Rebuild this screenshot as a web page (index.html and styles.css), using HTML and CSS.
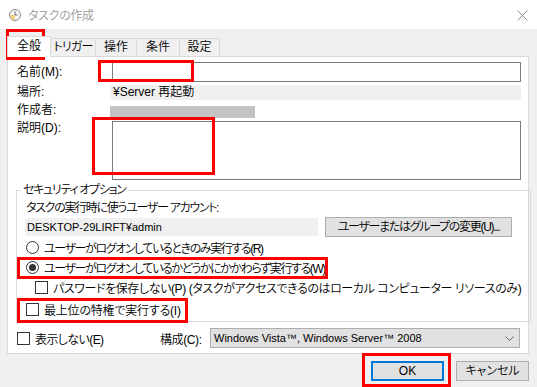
FILE: index.html
```html
<!DOCTYPE html>
<html lang="ja">

<head>
    <meta charset="UTF-8">
    <meta name="viewport" content="width=device-width, initial-scale=1.0">
    <title>タスクの作成</title>
    <link rel="stylesheet" href="styles.css">
</head>

<body>
    <div class="window">
        <div class="titlebar">
            <svg class="title-icon" width="12" height="12" viewBox="0 0 12 12">
                <circle cx="6" cy="6" r="5.5" fill="#f6f6f6" stroke="#8a8a8a" />
                <path d="M6 6 L1.2 6 A4.8 4.8 0 0 0 6 10.8 Z" fill="#f1d27a" />
                <path d="M6 2.2 L6 6 L8.5 6" fill="none" stroke="#6a6a6a" stroke-width="1" />
            </svg>
            <span class="title-text">タスクの作成</span>
            <svg class="close-icon" width="11" height="11" viewBox="0 0 11 11">
                <path d="M0.5 0.5 L10.5 10.5 M10.5 0.5 L0.5 10.5" stroke="#8a8a8a" stroke-width="1" />
            </svg>
        </div>

        <div class="body">
            <div class="tabs">
                <div class="tab active">全般</div>
                <div class="tab w45">トリガー</div>
                <div class="tab w41">操作</div>
                <div class="tab w43">条件</div>
                <div class="tab w40">設定</div>
            </div>

            <div class="panel">
                <div class="row row-name">
                    <span class="label">名前(M):</span>
                    <div class="input"></div>
                </div>
                <div class="row row-loc">
                    <span class="label">場所:</span>
                    <div class="readonly">¥Server 再起動</div>
                </div>
                <div class="row row-author">
                    <span class="label">作成者:</span>
                    <div class="redacted"></div>
                </div>
                <div class="row row-desc">
                    <span class="label">説明(D):</span>
                    <div class="textarea"></div>
                </div>

                <fieldset class="group">
                    <legend>セキュリティ オプション</legend>
                    <div class="account-label">タスクの実行時に使うユーザー アカウント:</div>
                    <div class="account-row">
                        <div class="account">DESKTOP-29LIRFT¥admin</div>
                        <div class="btn btn-change">ユーザーまたはグループの変更(U)...</div>
                    </div>
                    <div class="opt"><span class="radio"></span>ユーザーがログオンしているときのみ実行する(R)</div>
                    <div class="opt"><span class="radio checked"></span>ユーザーがログオンしているかどうかにかかわらず実行する(W)</div>
                    <div class="opt indent"><span class="check"></span>パスワードを保存しない(P) (タスクがアクセスできるのはローカル コンピューター リソースのみ)</div>
                    <div class="opt opt-last"><span class="check"></span>最上位の特権で実行する(I)</div>
                </fieldset>

                <div class="bottom-row">
                    <div class="opt hide-opt"><span class="check"></span>表示しない(E)</div>
                    <span class="config-label">構成(C):</span>
                    <div class="select">
                        <span class="select-text">Windows Vista™, Windows Server™ 2008</span>
                        <svg width="9" height="5" viewBox="0 0 9 5">
                            <path d="M0.5 0.5 L4.5 4.5 L8.5 0.5" fill="none" stroke="#606060" stroke-width="1" />
                        </svg>
                    </div>
                </div>
            </div>

            <div class="buttons">
                <div class="btn btn-ok">OK</div>
                <div class="btn">キャンセル</div>
            </div>
        </div>

        <!-- highlight boxes drawn over the dialog -->
        <div class="mark" style="left:6px;top:29px;width:39px;height:31px"></div>
        <div class="mark" style="left:98px;top:60px;width:96px;height:22px"></div>
        <div class="mark" style="left:92px;top:117px;width:123px;height:58px"></div>
        <div class="mark" style="left:17px;top:257px;width:311px;height:22px"></div>
        <div class="mark" style="left:17px;top:298px;width:171px;height:25px"></div>
        <div class="mark" style="left:362px;top:353px;width:89px;height:34px"></div>
    </div>
</body>

</html>
```

FILE: styles.css
```css
* {
    box-sizing: border-box;
}

body {
    margin: 0;
    background-color: #f0f0f0;
    font-family: "Liberation Sans", "Noto Sans CJK JP", sans-serif;
    font-size: 12px;
    font-weight: 350;
    font-feature-settings: "palt";
    color: #000;
}

.window {
    position: relative;
    width: 537px;
    height: 387px;
    overflow: hidden;
}

.titlebar {
    height: 29px;
    background-color: #fff;
    display: flex;
    align-items: center;
    padding: 0 9px 0 9px;
}

.title-icon {
    margin-top: 1px;
}

.title-text {
    margin-left: 7px;
    color: #9a9a9a;
    letter-spacing: -0.3px;
    flex: 1;
}

.close-icon {
    margin-top: 1px;
}

.body {
    padding: 0 8px 0 7px;
}

.tabs {
    display: flex;
    align-items: flex-end;
    height: 27px;
}

.tab {
    height: 18px;
    line-height: 17px;
    text-align: center;
    border: 1px solid #d9d9d9;
    border-bottom: none;
    border-left: none;
    background-color: #f0f0f0;
}

.tab.active {
    width: 44px;
    height: 21px;
    line-height: 19px;
    background-color: #fff;
    border-left: 1px solid #d9d9d9;
    margin-bottom: -1px;
    position: relative;
    z-index: 1;
}

.w45 { width: 45px; letter-spacing: -0.8px; }
.w41 { width: 41px; }
.w43 { width: 43px; }
.w40 { width: 40px; }

.panel {
    background-color: #fff;
    border: 1px solid #d9d9d9;
    padding: 5px 7px 4px 9px;
    height: 298px;
}

.row {
    display: flex;
}

.label {
    width: 93px;
    flex-shrink: 0;
    line-height: 15px;
}

.row-name {
    height: 20px;
    align-items: center;
}

.input {
    margin-left: 2px;
    flex: 1;
    height: 20px;
    border: 1px solid #7a7a7a;
    background-color: #fff;
}

.row-loc {
    margin-top: 3px;
    height: 15px;
}

.readonly {
    flex: 1;
    background-color: #f0f0f0;
    padding-left: 3px;
    line-height: 15px;
}

.row-author {
    margin-top: 3px;
    height: 15px;
    align-items: center;
}

.redacted {
    width: 145px;
    height: 12px;
    margin-top: 3px;
    background-color: #c3c3c3;
}

.row-desc {
    margin-top: 3px;
}

.textarea {
    margin-left: 2px;
    flex: 1;
    height: 59px;
    border: 1px solid #7a7a7a;
}

.group {
    margin: 3px 1px 0 -1px;
    padding: 0 9px 2px 9px;
    border: 1px solid #dcdcdc;
}

.group legend {
    padding: 0 2px;
    margin-left: -5px;
    line-height: 14px;
    letter-spacing: -1.3px;
}

.account-label {
    margin-top: 4px;
    line-height: 15px;
    letter-spacing: -1.3px;
}

.account-row {
    margin-top: 1px;
    height: 20px;
    display: flex;
    align-items: center;
}

.account {
    width: 293px;
    height: 18px;
    line-height: 18px;
    font-size: 11px;
    background-color: #f0f0f0;
    padding-left: 2px;
    margin-left: -1px;
}

.btn {
    height: 20px;
    line-height: 18px;
    border: 1px solid #adadad;
    background-color: #e1e1e1;
    text-align: center;
    white-space: nowrap;
    width: 73px;
}

.btn-change {
    margin-left: 7px;
    width: 187px;
    letter-spacing: -1.3px;
}

.opt {
    height: 20px;
    display: flex;
    align-items: center;
    white-space: nowrap;
    letter-spacing: -1.4px;
}

.radio,
.check {
    width: 13px;
    height: 13px;
    border: 1px solid #333;
    background-color: #fff;
    margin-right: 5px;
    flex-shrink: 0;
}

.indent {
    padding-left: 9px;
    letter-spacing: -0.4px;
}

.opt-last {
    margin-top: 2px;
    letter-spacing: -0.2px;
}

.radio {
    border-radius: 50%;
    display: flex;
    align-items: center;
    justify-content: center;
}

.radio.checked::after {
    content: "";
    width: 7px;
    height: 7px;
    border-radius: 50%;
    background-color: #333;
}

.bottom-row {
    display: flex;
    align-items: center;
    margin-top: 6px;
    height: 20px;
}

.hide-opt {
    width: 143px;
    letter-spacing: -0.6px;
}

.config-label {
    width: 50px;
    letter-spacing: -0.4px;
}

.select {
    flex: 1;
    height: 20px;
    margin-right: 1px;
    border: 1px solid #adadad;
    background-color: #e1e1e1;
    display: flex;
    align-items: center;
    justify-content: space-between;
    padding: 0 5px 0 3px;
}

.select-text {
    font-size: 11px;
}

.buttons {
    display: flex;
    justify-content: flex-end;
    gap: 12px;
    margin-top: 7px;
}

.btn-ok {
    border: 2px solid #0078d7;
    line-height: 16px;
}

.mark {
    position: absolute;
    border: 3px solid #f00;
}
```
